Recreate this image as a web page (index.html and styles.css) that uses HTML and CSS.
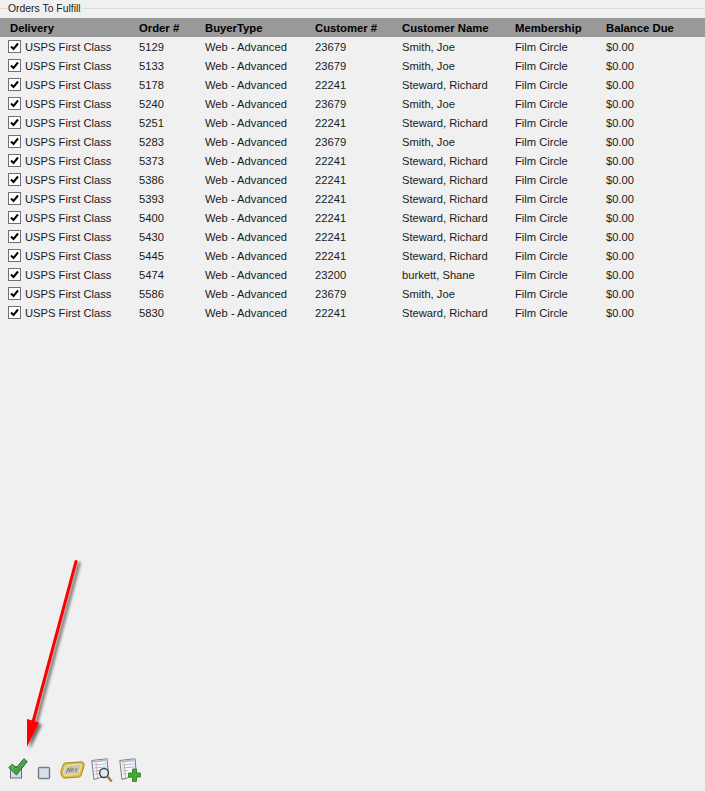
FILE: index.html
```html
<!DOCTYPE html>
<html lang="en">
<head>
    <meta charset="UTF-8">
    <meta name="viewport" content="width=device-width, initial-scale=1.0">
    <title>Orders To Fulfill</title>
    <link rel="stylesheet" href="styles.css">
</head>
<body>
    <div class="group">
        <span class="group-title">Orders To Fulfill</span>
    </div>

    <div class="grid-head">
        <span class="col col-delivery">Delivery</span>
        <span class="col col-order">Order #</span>
        <span class="col col-buyer">BuyerType</span>
        <span class="col col-custno">Customer #</span>
        <span class="col col-name">Customer Name</span>
        <span class="col col-member">Membership</span>
        <span class="col col-balance">Balance Due</span>
    </div>

    <div id="rows" class="grid-body"></div>

    <div class="toolbar">
        <!-- check all -->
        <svg class="tool" width="20" height="21" viewBox="0 0 20 21">
            <defs>
                <linearGradient id="tickFill" x1="0" y1="0" x2="1" y2="1">
                    <stop offset="0" stop-color="#6cc04a"/>
                    <stop offset="1" stop-color="#2f8f45"/>
                </linearGradient>
            </defs>
            <rect x="2.5" y="8.5" width="11" height="11.5" fill="#d5dde6" stroke="#66717f"/>
            <path d="M0.7 9.5 L4.5 6.2 L8.2 10 L15.8 0.7 L19.3 3.5 L8.5 17 Z" fill="url(#tickFill)" stroke="#2c6a3a"/>
        </svg>
        <!-- uncheck all -->
        <svg class="tool tool-check" width="14" height="14" viewBox="0 0 14 14">
            <rect x="1.5" y="1.5" width="11" height="11" rx="1" fill="#d9e0e9" stroke="#75808e" stroke-width="1.5"/>
        </svg>
        <!-- ticket -->
        <svg class="tool tool-ticket" width="25" height="18" viewBox="0 0 25 18">
            <path d="M5 2 L22 0.8 Q24.4 1.5 24.2 4.5 L21 14.5 Q20.5 15.8 19 16 L4 17.2 Q0.6 15.5 0.8 11 L3.2 3.6 Q3.6 2.2 5 2 Z" fill="#e0bf45" stroke="#a5872a" stroke-linejoin="round"/>
            <path d="M6.5 4.5 L20.5 3.2 Q21.6 3.6 21.2 5 L18.6 12.4 Q18.2 13.2 17.4 13.3 L5 14.4 Q3.4 13.6 3.6 11.5 L5.2 5.6 Q5.5 4.7 6.5 4.5 Z" fill="#cbc6b2" stroke="#f3e8a8"/>
            <path d="M6.5 11.5 L8.5 7 L9.8 11 M11 6.5 V11 M13 7 V10.5 M15 8 H17.5 M15 10 H17" fill="none" stroke="#6f6a58" stroke-width="0.9"/>
        </svg>
        <!-- find page -->
        <svg class="tool tool-page" width="22" height="25" viewBox="0 0 22 25">
            <path d="M0.8 2.5 L16 0.8 L17.5 17 L3 21.5 Z" fill="#f8f9fb" stroke="#6f7a86"/>
            <path d="M2 2.8 L15.5 1.3 L15.6 3.2 L2.2 4.7 Z" fill="#b9c2cc"/>
            <path d="M3 7 L15.5 5.8 M3.2 10 L15.8 8.8 M3.5 13 L9 12.4 M3.8 16 L8 15.6" stroke="#a9bccf"/>
            <path d="M5 4.5 L6.5 20" stroke="#e5a9a9"/>
            <circle cx="13" cy="15" r="4.4" fill="#dfeaf4" stroke="#3f4852" stroke-width="1.5"/>
            <path d="M16.3 18.3 L20.7 23.5" stroke="#a9772f" stroke-width="2.4"/>
        </svg>
        <!-- add page -->
        <svg class="tool tool-page" width="22" height="25" viewBox="0 0 22 25">
            <path d="M0.8 2.5 L16 0.8 L17.5 17 L3 21.5 Z" fill="#f8f9fb" stroke="#6f7a86"/>
            <path d="M2 2.8 L15.5 1.3 L15.6 3.2 L2.2 4.7 Z" fill="#b9c2cc"/>
            <path d="M3 7 L15.5 5.8 M3.2 10 L15.8 8.8 M3.5 13 L9 12.4 M3.8 16 L8 15.6" stroke="#a9bccf"/>
            <path d="M5 4.5 L6.5 20" stroke="#e5a9a9"/>
            <path d="M9.5 15 H13.5 V11 H17.5 V15 H21.5 V19 H17.5 V23.5 H13.5 V19 H9.5 Z" fill="#3fae2a" stroke="#2a7a22" stroke-width="0.8"/>
        </svg>
    </div>

    <!-- red annotation arrow over the window -->
    <svg class="arrow" width="80" height="210" viewBox="0 0 80 210">
        <defs>
            <filter id="arrowShadow" x="-30%" y="-10%" width="170%" height="120%">
                <feDropShadow dx="3" dy="2" stdDeviation="1.6" flood-color="#000" flood-opacity="0.55"/>
            </filter>
        </defs>
        <g filter="url(#arrowShadow)">
            <line x1="66" y1="11.5" x2="23" y2="172" stroke="#f00" stroke-width="3" stroke-linecap="round"/>
            <path d="M17 169 L29 172.5 L17 197 Z" fill="#f00"/>
        </g>
    </svg>

    <script src="rows.js"></script>
</body>
</html>
```

FILE: styles.css
```css
html, body {
    margin: 0;
    padding: 0;
}
body {
    position: relative;
    width: 705px;
    height: 791px;
    overflow: hidden;
    background: #f0f0f0;
    font-family: "Liberation Sans", Arial, sans-serif;
    font-size: 11.2px;
    color: #1a1a1a;
}
.group {
    height: 18px;
    padding-left: 8px;
    background: linear-gradient(#f0f0f0 8px, #dcdcdc 8px, #dcdcdc 9px, #f0f0f0 9px);
}
.group-title {
    display: inline-block;
    padding-right: 1px;
    background: #f0f0f0;
    font-size: 10.4px;
    line-height: 18px;
}
.grid-head {
    display: flex;
    height: 19px;
    background: #999999;
    font-size: 11.3px;
    font-weight: bold;
    line-height: 21px;
    color: #000;
}
.grid-body {
    height: 721px;
}
.row {
    display: flex;
    height: 19px;
    line-height: 21px;
}
.col {
    display: block;
    flex: none;
    white-space: nowrap;
}
.col-delivery { width: 139px; padding-left: 10px; box-sizing: border-box; }
.col-order { width: 66px; }
.col-buyer { width: 110px; }
.col-custno { width: 87px; }
.col-name { width: 113px; }
.col-member { width: 91px; }
.col-balance { width: 99px; }
.row .col-delivery {
    display: flex;
    align-items: flex-start;
    gap: 4px;
    padding-left: 8px;
}
.check {
    flex: none;
    width: 13px;
    height: 13px;
    margin-top: 3px;
    box-sizing: border-box;
    border: 1px solid #707070;
    background: #fff;
}
.check svg {
    display: block;
}
.toolbar {
    display: flex;
    align-items: flex-start;
    height: 30px;
    box-sizing: border-box;
    padding-left: 8px;
    gap: 6px;
    background: linear-gradient(#f0f0f0 30px, #e2e2e2 30px);
}
.tool {
    flex: none;
}
.tool-check {
    margin: 8px 3px 0;
}
.tool-ticket {
    margin-top: 3px;
}
.arrow {
    position: absolute;
    left: 10px;
    top: 550px;
}
```

FILE: rows.js
```js
const orders = [
    ['5129', '23679', 'Smith, Joe'],
    ['5133', '23679', 'Smith, Joe'],
    ['5178', '22241', 'Steward, Richard'],
    ['5240', '23679', 'Smith, Joe'],
    ['5251', '22241', 'Steward, Richard'],
    ['5283', '23679', 'Smith, Joe'],
    ['5373', '22241', 'Steward, Richard'],
    ['5386', '22241', 'Steward, Richard'],
    ['5393', '22241', 'Steward, Richard'],
    ['5400', '22241', 'Steward, Richard'],
    ['5430', '22241', 'Steward, Richard'],
    ['5445', '22241', 'Steward, Richard'],
    ['5474', '23200', 'burkett, Shane'],
    ['5586', '23679', 'Smith, Joe'],
    ['5830', '22241', 'Steward, Richard']
];

const tick = '<svg width="11" height="11" viewBox="0 0 11 11"><path d="M2 5.5 L4.5 8 L9 2.5" fill="none" stroke="#000" stroke-width="2"/></svg>';

document.getElementById('rows').innerHTML = orders.map(o => `
    <div class="row">
        <span class="col col-delivery"><span class="check">${tick}</span>USPS First Class</span>
        <span class="col col-order">${o[0]}</span>
        <span class="col col-buyer">Web - Advanced</span>
        <span class="col col-custno">${o[1]}</span>
        <span class="col col-name">${o[2]}</span>
        <span class="col col-member">Film Circle</span>
        <span class="col col-balance">$0.00</span>
    </div>`).join('');
```
